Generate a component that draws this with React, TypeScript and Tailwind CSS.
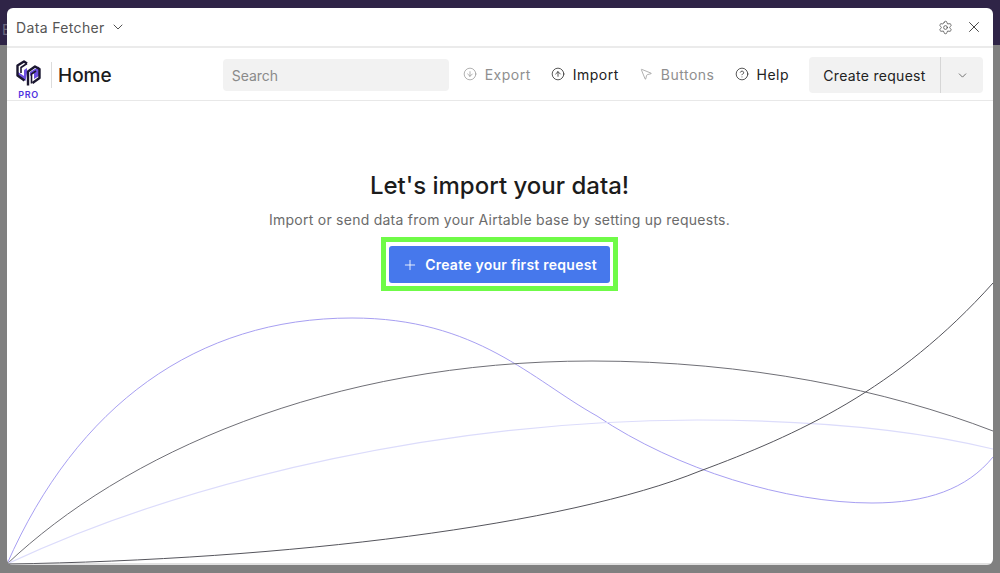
import { ChevronDown, CircleArrowDown, CircleArrowUp, CircleHelp, MousePointer2, Plus, Settings, X } from "lucide-react";

function Logo() {
  return (
    <svg width="25" height="27" viewBox="0 0 25 27" fill="none">
      <path d="M2 12 L8 16 L8 10 L11 8 L11 13 L9.5 21 L2 16 Z" fill="#6d4fe0" />
      <path d="M14 12 L23 6.5 L23 16 L18 19 L18 13 L14 16 Z" fill="#6d4fe0" />
      <path d="M11 3.5 L8 1.5 L1.5 5.5 L1.5 15.5 L8.5 20.5" stroke="#1b1730" strokeWidth="2.4" strokeLinejoin="round" />
      <path d="M11 3.5 L5 7.5 L5 13" stroke="#1b1730" strokeWidth="1.6" strokeLinejoin="round" />
      <path d="M12 25.5 L12 11.5 L19 6.5 L23.5 9 L23.5 18 L16.5 23" stroke="#1b1730" strokeWidth="2.4" strokeLinejoin="round" />
      <path d="M15.5 23.5 L15.5 14 L20 11" stroke="#1b1730" strokeWidth="1.6" strokeLinejoin="round" />
    </svg>
  );
}

function NavItem({
  icon,
  label,
  muted,
}: {
  icon: React.ReactNode;
  label: string;
  muted?: boolean;
}) {
  return (
    <div className={`flex items-center gap-2 ${muted ? "text-[#8f8f8f]" : "text-[#222]"}`}>
      {icon}
      <span className="text-[14px] tracking-[0.5px]">{label}</span>
    </div>
  );
}

function Curves() {
  return (
    <svg className="absolute bottom-0 left-0" width="986" height="290" viewBox="0 0 986 290" fill="none">
      <path d="M0 289 C70 130 190 43 345 43 C470 43 525 105 590 141 C670 195 780 228 865 228 C920 228 960 214 986 182" stroke="#a79ff2" strokeWidth="1" />
      <path d="M0 289 C115 180 320 86 585 86 C740 86 880 115 986 156" stroke="#6f6f76" strokeWidth="1" />
      <path d="M0 289 C190 200 450 145 690 145 C800 145 900 153 986 174" stroke="#dcdcfb" strokeWidth="1.2" />
      <path d="M0 289 C280 285 560 250 693 196 C790 160 890 115 986 8" stroke="#55555c" strokeWidth="1" />
      <path d="M0 289 H986" stroke="#8a8a8a" strokeWidth="1" opacity="0.5" />
    </svg>
  );
}

export default function App() {
  return (
    <div className="relative h-[573px] w-[1000px] overflow-hidden bg-[linear-gradient(to_bottom,#2f2447_0,#2f2447_45px,#808080_45px,#808080_100%)] pb-2 pl-[7px] pr-[7px] pt-2 font-['Inter',sans-serif]">
      <span className="absolute left-[2px] top-[19px] text-[14px] text-[#6e6880]">E</span>
      <div className="relative flex h-[557px] flex-col overflow-hidden rounded-md bg-white">
        <div className="flex h-[40px] shrink-0 items-center justify-between border-b-2 border-[#ebebeb] pl-[9px] pr-[10px]">
          <div className="flex items-center gap-[5px] text-[14px] tracking-[0.35px] text-[#555]">
            Data Fetcher
            <ChevronDown size={16} strokeWidth={1.4} className="text-[#444]" />
          </div>
          <div className="flex items-center gap-[12px] text-[#444]">
            <Settings size={15} strokeWidth={1.2} />
            <X size={18} strokeWidth={1.3} />
          </div>
        </div>

        <div className="flex h-[53px] shrink-0 items-center border-b border-[#e8e8e8] pl-[9px] pr-[10px] pt-[2px]">
          <div className="mt-[10px] flex w-[25px] flex-col items-center self-start">
            <Logo />
            <span className="mt-[3px] text-[9px] font-semibold leading-[10px] tracking-[0.6px] text-[#4f33e0]">PRO</span>
          </div>
          <div className="ml-[10px] h-[26px] w-px bg-[#dcdcdc]" />
          <span className="ml-[6px] mt-[2px] text-[19px] font-medium text-[#1c1c1c]">Home</span>

          <div className="ml-[111px] flex h-8 w-[226px] items-center rounded bg-[#f2f2f2] px-[9px] text-[14px] text-[#8a8a8a]">
            Search
          </div>

          <div className="mb-[2px] ml-[14px] flex items-center gap-[20px]">
            <NavItem muted label="Export" icon={<CircleArrowDown size={14} strokeWidth={1.2} />} />
            <NavItem label="Import" icon={<CircleArrowUp size={14} strokeWidth={1.3} />} />
            <NavItem muted label="Buttons" icon={<MousePointer2 size={14} strokeWidth={1.2} />} />
            <NavItem label="Help" icon={<CircleHelp size={14} strokeWidth={1.3} />} />
          </div>

          <div className="ml-auto flex h-9 items-stretch rounded bg-[#f2f2f2] text-[#222]">
            <div className="flex w-[132px] items-center justify-center border-r border-[#d6d6d6] text-[14px] tracking-[0.3px]">
              Create request
            </div>
            <div className="flex w-[42px] items-center justify-center">
              <ChevronDown size={13} strokeWidth={1.5} className="text-[#555]" />
            </div>
          </div>
        </div>

        <div className="relative flex flex-1 flex-col items-center pr-px pt-[69px]">
          <Curves />
          <h1 className="relative text-[24px] font-medium leading-[32px] text-[#1c1c1c]">Let's import your data!</h1>
          <p className="relative mt-[8px] text-[14px] leading-5 tracking-[0.25px] text-[#6b6b6b]">
            Import or send data from your Airtable base by setting up requests.
          </p>
          <div className="relative mt-[7px] border-[5px] border-[#6ffb47] bg-white px-[3px] pb-[3px] pt-[4px]">
            <button
              type="button"
              className="flex h-[37px] w-[221px] items-center justify-center gap-[7px] rounded-[3px] bg-[#4678ec] text-[14px] font-semibold tracking-[0.25px] text-white"
            >
              <Plus size={16} strokeWidth={1.3} />
              Create your first request
            </button>
          </div>
        </div>
      </div>
    </div>
  );
}
